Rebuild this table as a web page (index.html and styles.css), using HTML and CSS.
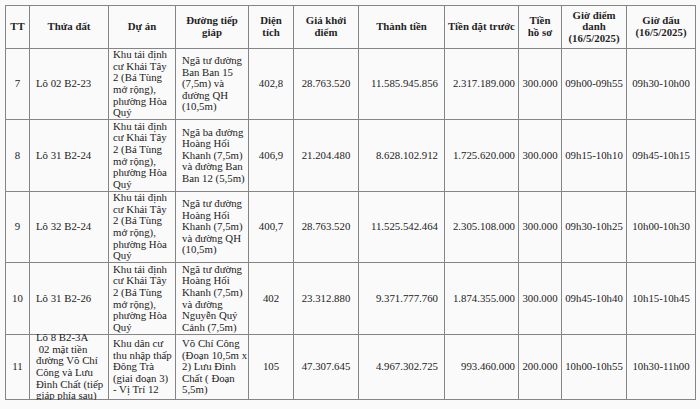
FILE: index.html
```html
<!DOCTYPE html>
<html lang="vi">
<head>
<meta charset="utf-8">
<title>Danh sách lô đất đấu giá</title>
<link rel="stylesheet" href="styles.css">
</head>
<body>
<table class="sheet">
  <colgroup>
    <col class="w-tt"><col class="w-lot"><col class="w-proj"><col class="w-road"><col class="w-area"><col class="w-price"><col class="w-total"><col class="w-deposit"><col class="w-fee"><col class="w-check"><col class="w-bid">
  </colgroup>
  <thead>
    <tr class="h-head">
      <th><div class="c">TT</div></th>
      <th><div class="c">Thửa đất</div></th>
      <th><div class="c">Dự án</div></th>
      <th><div class="c">Đường tiếp<br>giáp</div></th>
      <th><div class="c">Diện<br>tích</div></th>
      <th><div class="c">Giá khởi<br>điểm</div></th>
      <th><div class="c">Thành tiền</div></th>
      <th><div class="c">Tiền đặt trước</div></th>
      <th><div class="c">Tiền<br>hồ sơ</div></th>
      <th><div class="c">Giờ điểm<br>danh<br>(16/5/2025)</div></th>
      <th><div class="c">Giờ đấu<br>(16/5/2025)</div></th>
    </tr>
  </thead>
  <tbody>
    <tr class="h-r7">
      <td><div class="c ctr">7</div></td>
      <td><div class="c lft">Lô 02 B2-23</div></td>
      <td><div class="c lft">Khu tái định<br>cư Khái Tây<br>2 (Bá Tùng<br>mở rộng),<br>phường Hòa<br>Quý</div></td>
      <td><div class="c lft">Ngã tư đường<br>Ban Ban 15<br>(7,5m) và<br>đường QH<br>(10,5m)</div></td>
      <td><div class="c ctr">402,8</div></td>
      <td><div class="c ctr">28.763.520</div></td>
      <td><div class="c rgt">11.585.945.856</div></td>
      <td><div class="c rgt">2.317.189.000</div></td>
      <td><div class="c ctr">300.000</div></td>
      <td><div class="c ctr">09h00-09h55</div></td>
      <td><div class="c ctr">09h30-10h00</div></td>
    </tr>
    <tr class="h-r8">
      <td><div class="c ctr">8</div></td>
      <td><div class="c lft">Lô 31 B2-24</div></td>
      <td><div class="c lft">Khu tái định<br>cư Khái Tây<br>2 (Bá Tùng<br>mở rộng),<br>phường Hòa<br>Quý</div></td>
      <td><div class="c lft">Ngã ba đường<br>Hoàng Hối<br>Khanh (7,5m)<br>và đường Ban<br>Ban 12 (5,5m)</div></td>
      <td><div class="c ctr">406,9</div></td>
      <td><div class="c ctr">21.204.480</div></td>
      <td><div class="c rgt">8.628.102.912</div></td>
      <td><div class="c rgt">1.725.620.000</div></td>
      <td><div class="c ctr">300.000</div></td>
      <td><div class="c ctr">09h15-10h10</div></td>
      <td><div class="c ctr">09h45-10h15</div></td>
    </tr>
    <tr class="h-r9">
      <td><div class="c ctr">9</div></td>
      <td><div class="c lft">Lô 32 B2-24</div></td>
      <td><div class="c lft">Khu tái định<br>cư Khái Tây<br>2 (Bá Tùng<br>mở rộng),<br>phường Hòa<br>Quý</div></td>
      <td><div class="c lft">Ngã tư đường<br>Hoàng Hối<br>Khanh (7,5m)<br>và đường QH<br>(10,5m)</div></td>
      <td><div class="c ctr">400,7</div></td>
      <td><div class="c ctr">28.763.520</div></td>
      <td><div class="c rgt">11.525.542.464</div></td>
      <td><div class="c rgt">2.305.108.000</div></td>
      <td><div class="c ctr">300.000</div></td>
      <td><div class="c ctr">09h30-10h25</div></td>
      <td><div class="c ctr">10h00-10h30</div></td>
    </tr>
    <tr class="h-r10">
      <td><div class="c ctr">10</div></td>
      <td><div class="c lft">Lô 31 B2-26</div></td>
      <td><div class="c lft">Khu tái định<br>cư Khái Tây<br>2 (Bá Tùng<br>mở rộng),<br>phường Hòa<br>Quý</div></td>
      <td><div class="c lft">Ngã tư đường<br>Hoàng Hối<br>Khanh (7,5m)<br>và đường<br>Nguyễn Quý<br>Cảnh (7,5m)</div></td>
      <td><div class="c ctr">402</div></td>
      <td><div class="c ctr">23.312.880</div></td>
      <td><div class="c rgt">9.371.777.760</div></td>
      <td><div class="c rgt">1.874.355.000</div></td>
      <td><div class="c ctr">300.000</div></td>
      <td><div class="c ctr">09h45-10h40</div></td>
      <td><div class="c ctr">10h15-10h45</div></td>
    </tr>
    <tr class="h-r11">
      <td><div class="c ctr">11</div></td>
      <td><div class="c lft">Lô 8 B2-3A<br>&nbsp;02 mặt tiền<br>đường Võ Chí<br>Công và Lưu<br>Đình Chất (tiếp<br>giáp phía sau)</div></td>
      <td><div class="c lft">Khu dân cư<br>thu nhập thấp<br>Đông Trà<br>(giai đoạn 3)<br>- Vị Trí 12</div></td>
      <td><div class="c lft">Võ Chí Công<br>(Đoạn 10,5m x<br>2) Lưu Đình<br>Chất ( Đoạn<br>5,5m)</div></td>
      <td><div class="c ctr">105</div></td>
      <td><div class="c ctr">47.307.645</div></td>
      <td><div class="c rgt">4.967.302.725</div></td>
      <td><div class="c rgt">993.460.000</div></td>
      <td><div class="c ctr">200.000</div></td>
      <td><div class="c ctr">10h00-10h55</div></td>
      <td><div class="c ctr">10h30-11h00</div></td>
    </tr>
  </tbody>
</table>
</body>
</html>
```
FILE: styles.css
```css
html, body {
  margin: 0;
  padding: 0;
  background: #fafafa;
}
body {
  padding: 5px 0 0 5px;
  font-family: "Liberation Serif", "Times New Roman", serif;
  font-size: 10.8px;
  line-height: 11.6px;
  color: #222222;
}
.sheet {
  border-collapse: collapse;
  table-layout: fixed;
  width: 690px;
}
.sheet th, .sheet td {
  border: 1px solid #858585;
  padding: 0;
  vertical-align: middle;
}
.sheet th {
  font-weight: bold;
  text-align: center;
  color: #1f1f1f;
}
.c {
  display: flex;
  flex-direction: column;
  justify-content: center;
  overflow: visible;
  white-space: nowrap;
}
.lft { text-align: left; padding-left: 5px; }
.ctr { text-align: center; }
.rgt { text-align: right; padding-right: 4px; }

.w-tt { width: 24px; }
.w-lot { width: 79px; }
.w-proj { width: 67px; }
.w-road { width: 73px; }
.w-area { width: 45px; }
.w-price { width: 65px; }
.w-total { width: 86px; }
.w-deposit { width: 74px; }
.w-fee { width: 43px; }
.w-check { width: 65px; }
.w-bid { width: 69px; }

.h-head .c { height: 42px; }
.h-r7 .c { height: 70px; }
.h-r8 .c { height: 71px; }
.h-r9 .c { height: 70px; }
.h-r10 .c { height: 71px; }
.h-r11 .c { height: 64px; }

.sheet td:nth-child(7) .rgt { padding-right: 6px; }
.sheet td:nth-child(8) .rgt { padding-right: 3px; }
.sheet td:nth-child(2) .lft { padding-left: 6px; }
.sheet td:nth-child(3) .lft { padding-left: 4px; }
.sheet td:nth-child(4) .lft { padding-left: 6px; }
```
